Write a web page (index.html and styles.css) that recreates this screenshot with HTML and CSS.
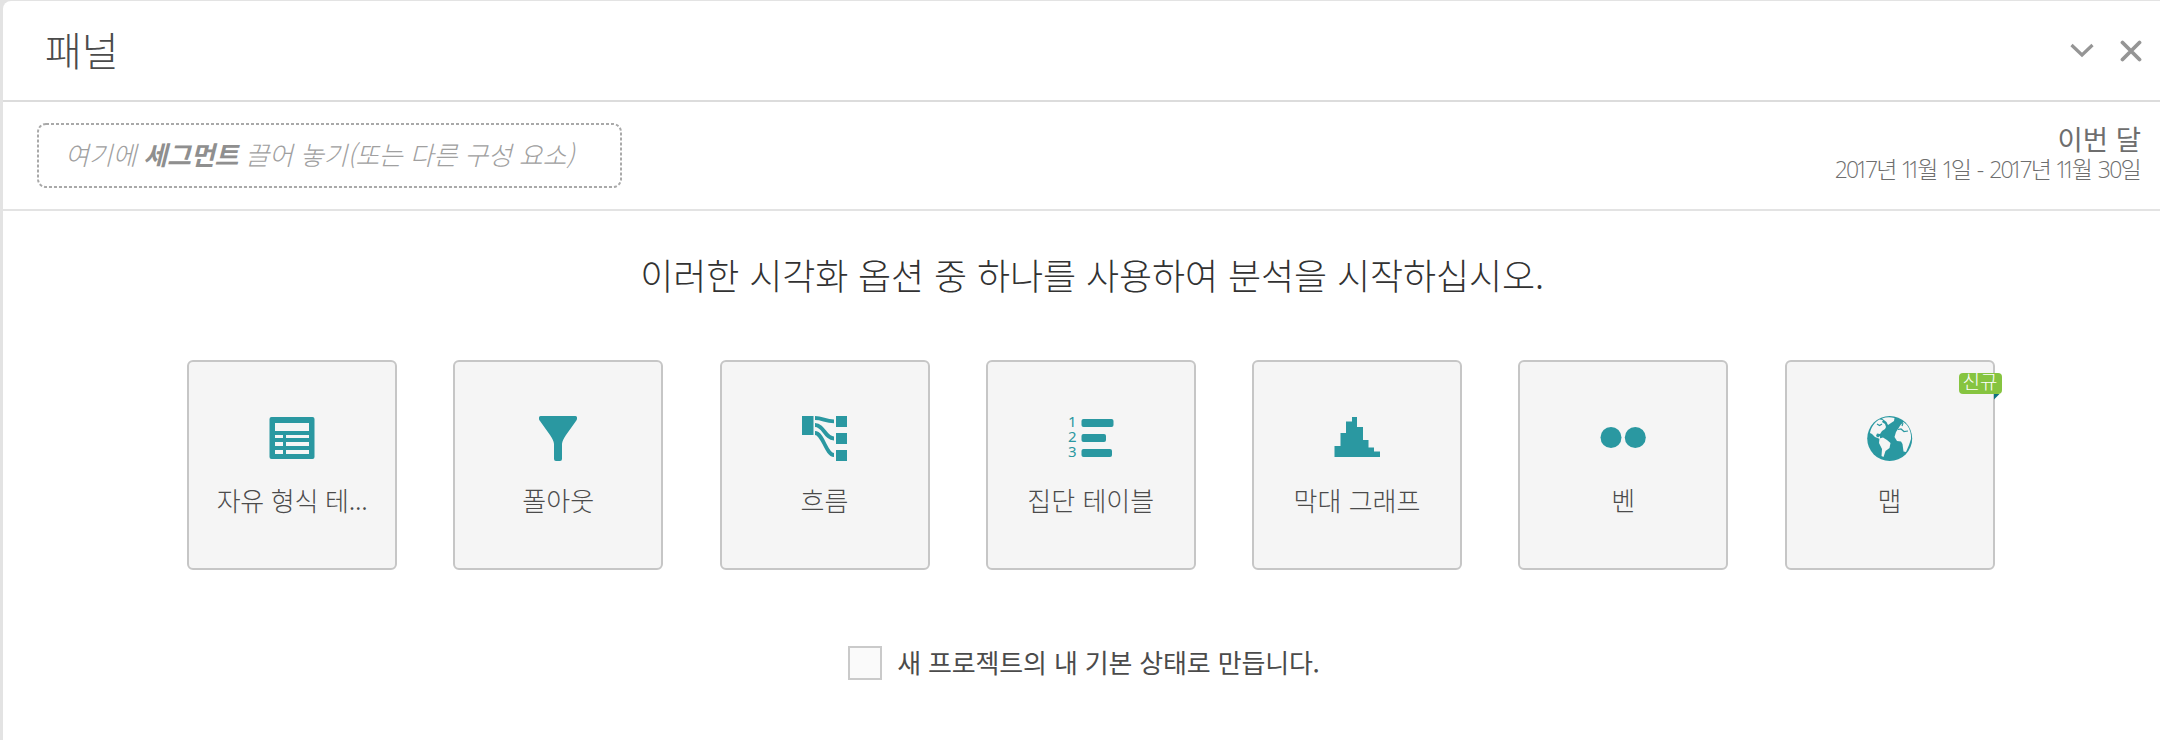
FILE: index.html
```html
<!DOCTYPE html>
<html lang="ko">
<head>
<meta charset="utf-8">
<title>패널</title>
<link rel="stylesheet" href="styles.css">
</head>
<body>
<section class="panel">
  <header class="panel-header">
    <h1 class="panel-title">패널</h1>
    <div class="panel-actions">
      <svg class="chevron" width="24" height="16" viewBox="0 0 24 16"><path d="M1.500 2 12 12 22.500 2" fill="none" stroke="#959595" stroke-width="3.200"/></svg>
      <svg class="close" width="22" height="22" viewBox="0 0 22 22"><path d="M2.500 2.500 19.500 19.500M19.500 2.500 2.500 19.500" fill="none" stroke="#959595" stroke-width="3.800" stroke-linecap="round"/></svg>
    </div>
  </header>
  <div class="segment-bar">
    <div class="dropzone">
      <svg class="dropzone-frame" width="585" height="65"><rect x="1" y="1" width="583" height="63" rx="8"/></svg>
      <span class="dropzone-text">여기에 <b>세그먼트</b> 끌어 놓기(또는 다른 구성 요소)</span>
    </div>
    <div class="date">
      <div class="date-name">이번 달</div>
      <div class="date-range">20<i>1</i>7년 <i>1</i><i>1</i>월 <i>1</i>일 - 20<i>1</i>7년 <i>1</i><i>1</i>월 30일</div>
    </div>
  </div>
  <main class="content">
    <h2 class="prompt">이러한 시각화 옵션 중 하나를 사용하여 분석을 시작하십시오.</h2>
    <div class="cards">
      <div class="card">
        <svg class="icon" viewBox="0 0 46 46"><path fill-rule="evenodd" d="M2.500 2H43.500Q45.500 2 45.500 4V42Q45.500 44 43.500 44H2.500Q.5 44 .5 42V4Q.5 2 2.500 2ZM6 8V16H40V8ZM6 20V23H14V20ZM17 20V23H40V20ZM6 27V31H14V27ZM17 27V31H40V27ZM6 35V39H14V35ZM17 35V39H40V35Z"/></svg>
        <div class="label label-wide">자유 형식 테...</div>
      </div>
      <div class="card">
        <svg class="icon" viewBox="0 0 46 46"><path d="M5.500 1H40.500Q42 1 42 2.500V4Q41.800 5 41 6L31 20Q27 26 27 29V44Q27 46 25 46H21Q19 46 19 44V29Q19 26 15 20L5 6Q4 5 4 4V2.500Q4 1 5.500 1Z"/></svg>
        <div class="label">폴아웃</div>
      </div>
      <div class="card">
        <svg class="icon" viewBox="0 0 46 46"><path d="M0 1H11.500V20H0ZM34 1H45V12H34ZM34 18H45V29H34ZM34 35H45V46H34Z"/><path fill="none" stroke="#2a98a1" stroke-width="3.800" d="M13 3C21 3 23 6.300 32 6.300M13 10C22 10 23 23.500 32 23.500M13 18C21 18 24 40 32 40"/></svg>
        <div class="label">흐름</div>
      </div>
      <div class="card">
        <svg class="icon" viewBox="0 0 46 46"><g class="numerals"><text x="0" y="12">1</text><text x="0" y="27">2</text><text x="0" y="42">3</text></g><rect x="13.500" y="4" width="32" height="8" rx="2"/><rect x="13.500" y="19" width="24.500" height="8" rx="2"/><rect x="13.500" y="34" width="30.500" height="8" rx="2"/></svg>
        <div class="label">집단 테이블</div>
      </div>
      <div class="card">
        <svg class="icon" viewBox="0 0 46 46"><path d="M.5 31H6.500V18H12V6.500H18V2H23V12H29V25H34.500V32.500H40V36.500H46V42H.5Z"/></svg>
        <div class="label">막대 그래프</div>
      </div>
      <div class="card">
        <svg class="icon" viewBox="0 0 46 46"><circle cx="11" cy="22.500" r="10.500"/><circle cx="35.300" cy="22.500" r="10.500"/></svg>
        <div class="label">벤</div>
      </div>
      <div class="card">
        <svg class="icon" viewBox="0 0 46 46"><circle cx="22.700" cy="23.500" r="22.500"/><g fill="#f5f5f5"><path d="M3 18C4 12 8 7 12.500 4.500L16 5 15 7 18 9 19 12 18 14 15 16 13 19 10 18.500 9 21 11 22.500 13 21 13 24 8 22 5 19Z"/><path d="M15 3.500Q21 1.500 27.500 3L27 6 24 8 21 10 19.500 7Z"/><path d="M12.500 23.500 16 22.500 20 25 23.500 28 22.500 33 18.500 36 16.500 42 14.500 41 15 34 12 28Z"/><path d="M33.500 10 36.500 7 40 10C43 14 44.500 19 44 24L42 30 39 37 36.500 36.500 35.500 29 34 26.500 30 26 27.500 22 29 17 31 14Z"/></g><path fill="none" stroke="#2a98a1" stroke-width="1.200" d="M31 14.500 34 14 37 16.500 41 16M10 9 12.500 10.500 15 9M36 8 35 11"/></svg>
        <div class="label">맵</div>
        <div class="badge">신규<svg class="badge-fold" width="6" height="6" viewBox="0 0 6 6"><path d="M0 0H5.500L0 5.500Z" fill="#0f7280"/></svg></div>
      </div>
    </div>
    <label class="default-option"><span class="checkbox"></span><span class="option-text">새 프로젝트의 내 기본 상태로 만듭니다.</span></label>
  </main>
</section>
</body>
</html>
```
FILE: styles.css
```css
* { box-sizing: border-box; }
body {
  margin: 0;
  background: #e3e3e3;
  font-family: "Noto Sans CJK KR", sans-serif;
  font-weight: 300;
  overflow: hidden;
}
h1, h2 { margin: 0; font-weight: 300; }
svg { display: block; }
.panel {
  margin: 1px 0 0 3px;
  height: 739px;
  background: #fff;
  border-top-left-radius: 8px;
}
.panel-header {
  height: 101px;
  border-bottom: 2px solid #dcdcdc;
  display: flex;
  justify-content: space-between;
  align-items: center;
  padding: 0 18px 2px 42px;
}
.panel-title { padding-bottom: 1px; font-size: 40px; line-height: 58px; color: #4b4b4b; }
.panel-actions { display: flex; align-items: center; gap: 26px; padding-top: 2px; }
.segment-bar {
  height: 109px;
  border-bottom: 2px solid #e3e3e3;
  display: flex;
  justify-content: space-between;
  align-items: flex-start;
  padding: 21px 19px 0 34px;
}
.dropzone {
  width: 585px;
  height: 65px;
  display: grid;
  align-items: center;
}
.dropzone > * { grid-area: 1 / 1; }
.dropzone-frame rect { fill: none; stroke: #a9a9a9; stroke-width: 2; stroke-dasharray: 3 2; }
.dropzone-text {
  padding: 0 0 4px 28px;
  font-size: 26px;
  line-height: 38px;
  letter-spacing: -0.2px;
  font-style: italic;
  color: #a0a0a0;
  white-space: nowrap;
}
.dropzone-text b { font-weight: 700; color: #8f8f8f; }
.date { text-align: right; color: #6e6e6e; white-space: nowrap; }
.date-name { font-size: 27.500px; line-height: 31px; font-weight: 400; }
.date-range {
  padding-right: 1px;
  font-family: "Open Sans", "Noto Sans CJK KR", sans-serif;
  font-size: 23px;
  line-height: 30px;
  letter-spacing: -1.750px;
  word-spacing: 2.500px;
}
.date-range i { font-style: normal; margin: 0 -2px; }
.content { display: flex; flex-direction: column; align-items: center; }
.prompt {
  margin-top: 37px;
  padding-left: 21px;
  font-size: 36px;
  line-height: 52px;
  letter-spacing: -0.12px;
  color: #323232;
  white-space: nowrap;
}
.cards {
  align-self: stretch;
  display: flex;
  justify-content: space-between;
  margin-top: 60px;
  padding: 0 165.500px 0 184px;
}
.card {
  position: relative;
  width: 210px;
  height: 210px;
  border: 2px solid #c6c6c6;
  border-radius: 6px;
  background: #f5f5f5;
  display: flex;
  flex-direction: column;
  align-items: center;
  padding-top: 53px;
}
.icon { width: 46px; height: 46px; fill: #2a98a1; }
.numerals { font: 400 15px "Noto Sans", sans-serif; }
.label { margin-top: 20px; font-size: 26px; line-height: 38px; color: #4b4b4b; white-space: nowrap; }
.label-wide { letter-spacing: -0.3px; }
.badge {
  position: absolute;
  top: 11px;
  right: -9px;
  width: 43px;
  height: 21px;
  border-radius: 4px;
  background: #86c440;
  color: #fff;
  font-size: 19px;
  line-height: 15px;
  text-align: center;
}
.badge-fold { position: absolute; top: 21px; right: 2px; }
.default-option { display: flex; align-items: center; margin-top: 73px; gap: 15px; padding-left: 5px; }
.checkbox { width: 34px; height: 34px; border: 2px solid #cacaca; background: #fafafa; }
.option-text { padding-bottom: 2px; font-size: 26px; line-height: 38px; letter-spacing: -0.18px; font-weight: 400; color: #4b4b4b; }
```
